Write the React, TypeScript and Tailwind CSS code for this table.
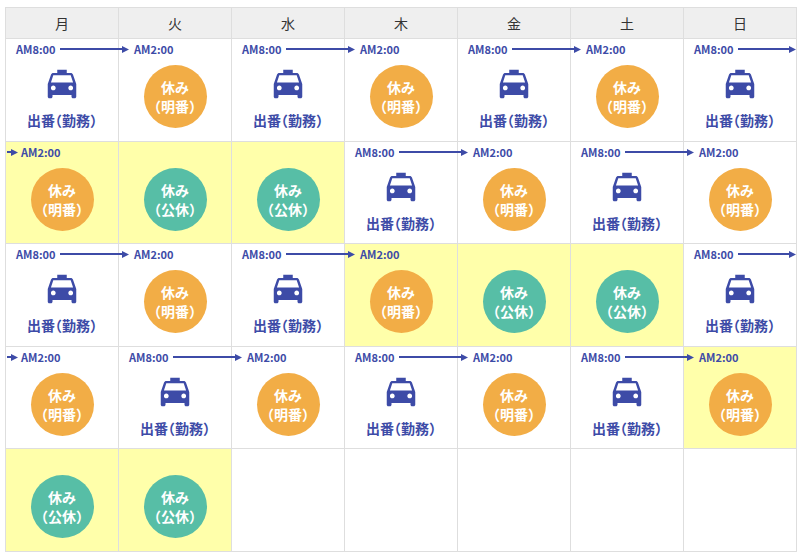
import React from 'react';

type Kind = 'work' | 'ake' | 'off' | 'empty';

interface Day {
  kind: Kind;
  yellow?: boolean;
}

const BLUE = '#3d4ba7';

const WEEK = ['月', '火', '水', '木', '金', '土', '日'];

const w: Day = { kind: 'work' };
const a: Day = { kind: 'ake' };
const ay: Day = { kind: 'ake', yellow: true };
const oy: Day = { kind: 'off', yellow: true };
const e: Day = { kind: 'empty' };

const ROWS: Day[][] = [
  [w, a, w, a, w, a, w],
  [ay, oy, oy, w, a, w, a],
  [w, a, w, ay, oy, oy, w],
  [a, w, a, w, a, w, ay],
  [oy, oy, e, e, e, e, e],
];

// 行の高さ（合計を元画像に合わせて交互に）
const ROW_H = ['h-[103px]', 'h-[102px]', 'h-[103px]', 'h-[102px]', 'h-[103px]'];

function Taxi() {
  return (
    <svg width="38" height="38" viewBox="0 0 24 24" fill={BLUE}>
      <path d="M18.92 6.01C18.72 5.42 18.16 5 17.5 5H15V3H9v2H6.5c-.66 0-1.21.42-1.42 1.01L3 12v8c0 .55.45 1 1 1h1c.55 0 1-.45 1-1v-1h12v1c0 .55.45 1 1 1h1c.55 0 1-.45 1-1v-8l-2.08-5.99zM6.5 16c-.83 0-1.5-.67-1.5-1.5S5.67 13 6.5 13s1.5.67 1.5 1.5S7.33 16 6.5 16zm11 0c-.83 0-1.5-.67-1.5-1.5s.67-1.5 1.5-1.5 1.5.67 1.5 1.5-.67 1.5-1.5 1.5zM5 11l1.5-4.5h11L19 11H5z" />
    </svg>
  );
}

function Head() {
  return (
    <svg width="7" height="7" viewBox="0 0 7 7" className="shrink-0 -ml-px">
      <polygon points="0,0 7,3.5 0,7" fill={BLUE} />
    </svg>
  );
}

function Circle({ color, sub }: { color: string; sub: string }) {
  return (
    <div
      className={`mx-auto mt-[6px] flex h-[63px] w-[63px] flex-col items-center justify-center rounded-full text-[14px] font-bold leading-[19px] text-white [font-feature-settings:'halt'] ${color}`}
    >
      <span>休み</span>
      <span>（{sub}）</span>
    </div>
  );
}

function DayCell({ day, col, rowH }: { day: Day; col: number; rowH: string }) {
  const bg = day.yellow ? 'bg-[#ffffaa]' : 'bg-white';
  return (
    <div className={`relative flex flex-col border-r border-b border-[#dedede] ${rowH} ${bg}`}>
      {/* 時刻ラベル */}
      <div className="flex h-[20px] items-center text-[11px] font-bold text-[#3d4ba7]">
        {day.kind === 'work' && (
          <>
            <span className="pl-[10px]">AM8:00</span>
            <span
              className={`relative z-10 ml-[5px] flex flex-1 items-center ${col === 6 ? '' : '-mr-[11px]'}`}
            >
              <span className="h-[2px] flex-1 bg-[#3d4ba7]" />
              <Head />
            </span>
          </>
        )}
        {day.kind === 'ake' && (
          <>
            {col === 0 && (
              <span className="absolute left-[1px] top-[6.5px] flex w-[11px] items-center">
                <span className="h-[2px] flex-1 bg-[#3d4ba7]" />
                <Head />
              </span>
            )}
            <span className="pl-[15px]">AM2:00</span>
          </>
        )}
      </div>

      {day.kind === 'work' && (
        <div className="flex flex-col items-center">
          <div className="mt-[6px]">
            <Taxi />
          </div>
          <div className="mt-[7px] text-[14px] font-bold leading-[20px] text-[#3d4ba7] [font-feature-settings:'halt']">
            出番（勤務）
          </div>
        </div>
      )}
      {day.kind === 'ake' && <Circle color="bg-[#f2ad46]" sub="明番" />}
      {day.kind === 'off' && <Circle color="bg-[#57bea6]" sub="公休" />}
    </div>
  );
}

export default function App() {
  return (
    <div className="min-h-screen bg-white pt-[7px] pl-[5px] [font-family:'Noto_Sans_CJK_JP','Noto_Sans',sans-serif]">
      <div className="grid w-[792px] grid-cols-7 border-l border-t border-[#dedede]">
        {WEEK.map((d) => (
          <div
            key={d}
            className="flex h-[31px] items-center justify-center border-r border-b border-[#dedede] bg-[#efefef] text-[14px] text-[#333]"
          >
            {d}
          </div>
        ))}
        {ROWS.map((row, ri) =>
          row.map((day, ci) => <DayCell key={`${ri}-${ci}`} day={day} col={ci} rowH={ROW_H[ri]} />)
        )}
      </div>
    </div>
  );
}
